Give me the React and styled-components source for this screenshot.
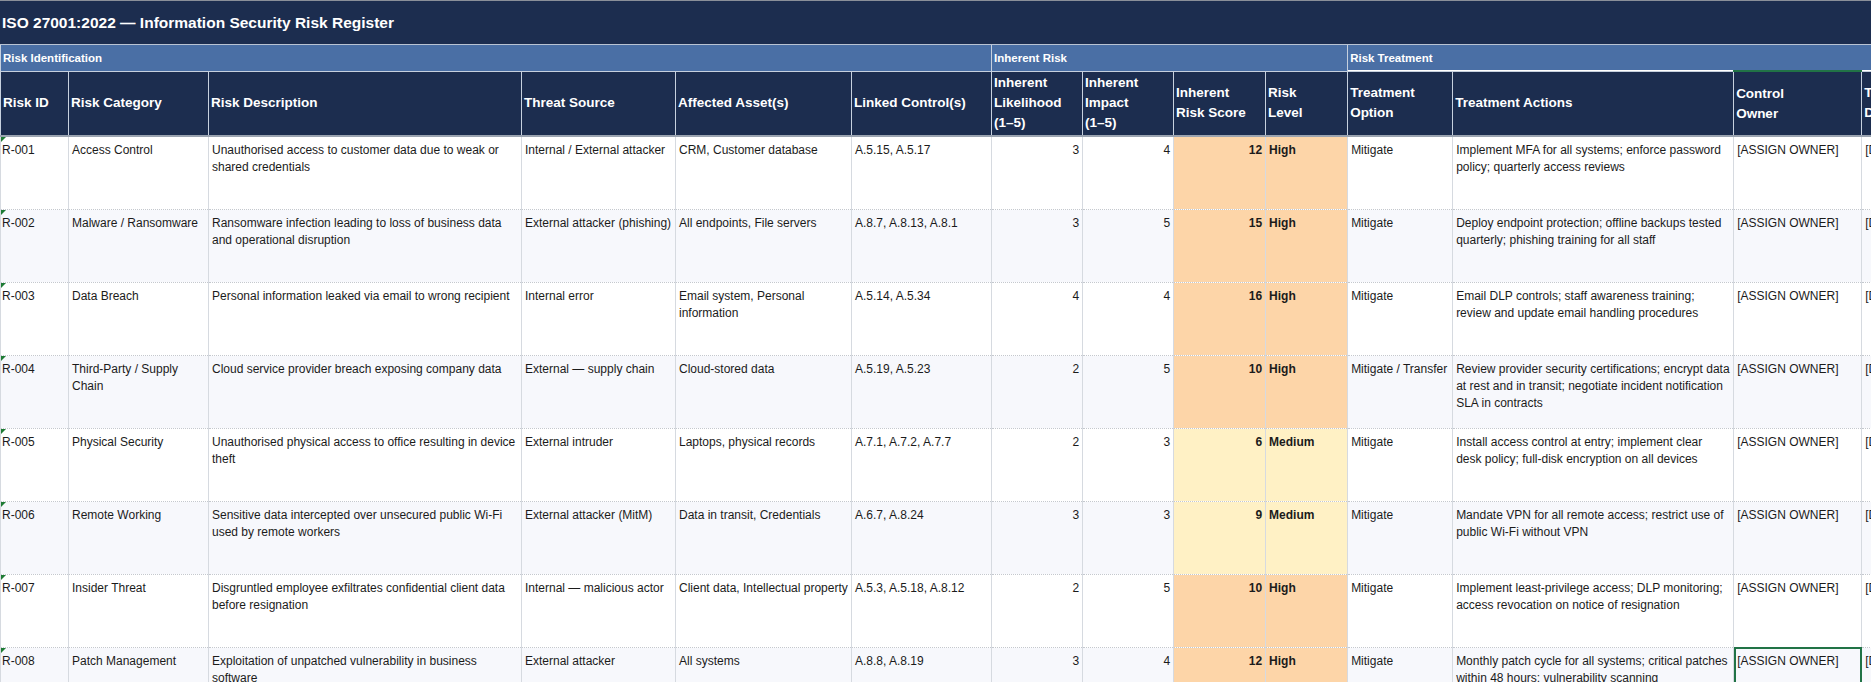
import React from 'react';
import styled, { createGlobalStyle } from 'styled-components';

const Global = createGlobalStyle`
  html, body { margin: 0; padding: 0; background: #fff; }
  body { font-family: "Liberation Sans", Arial, sans-serif; }
`;

const Sheet = styled.div`
  width: 1871px;
  height: 682px;
  overflow: hidden;
  position: relative;
  border-top: 1px solid #8a8f99;
  box-sizing: border-box;
`;

const Title = styled.div`
  height: 44px;
  width: 2000px;
  background: #1c2d4f;
  color: #fff;
  font-size: 15.5px;
  font-weight: 700;
  display: flex;
  align-items: center;
  padding-left: 2px;
  border-bottom: 1px solid #b9c3d3;
  box-sizing: border-box;
`;

const Table = styled.table`
  border-collapse: collapse;
  table-layout: fixed;
  width: ${(p) => p.$width}px;
  font-size: 12px;
  color: #1b1b1b;
`;

const GroupCell = styled.th`
  background: #4a6fa5;
  color: #fff;
  font-size: 11.5px;
  font-weight: 700;
  text-align: left;
  height: 25px;
  padding: 0 2px;
  border-left: 1px solid #c6d0de;
  border-bottom: 1px solid #c6d0de;
  white-space: nowrap;
  overflow: hidden;
`;

const HeadCell = styled.th`
  background: #1c2d4f;
  color: #fff;
  font-size: 13.5px;
  font-weight: 700;
  text-align: left;
  height: 63px;
  padding: 0 2px;
  line-height: 20px;
  border-left: 1px solid #c6d0de;
  border-bottom: 2px solid #9aa3b0;
  white-space: nowrap;
  overflow: hidden;
  ${(p) => p.$active && 'border-top: 2px solid #217346;'}
`;

const Row = styled.tr`
  height: 73px;
  background: ${(p) => (p.$alt ? '#f7f8fc' : '#fff')};
`;

const Cell = styled.td`
  vertical-align: top;
  padding: 5px 3px 0;
  line-height: 17px;
  border-left: 1px solid #d6dae0;
  border-bottom: 1px dotted #c4c8ce;
  text-align: ${(p) => (p.$num ? 'right' : 'left')};
  font-weight: ${(p) => (p.$bold ? 700 : 400)};
  background: ${(p) => p.$bg || 'transparent'};
  white-space: ${(p) => (p.$nowrap ? 'nowrap' : 'normal')};
  overflow: hidden;
  position: relative;
  ${(p) => p.$selected && 'outline: 2px solid #217346; outline-offset: -2px;'}
`;

const IdCell = styled(Cell)`
  padding-left: 1px;
  &::before {
    content: '';
    position: absolute;
    left: 0;
    top: 0;
    border-top: 5px solid #1e7b34;
    border-right: 5px solid transparent;
  }
`;

const cols = [68, 140, 313, 154, 176, 140, 91, 91, 92, 82, 105, 281, 128, 120];

const risks = [
  ['R-001', 'Access Control', 'Unauthorised access to customer data due to weak or shared credentials', 'Internal / External attacker', 'CRM, Customer database', 'A.5.15, A.5.17', 3, 4, 'Mitigate', 'Implement MFA for all systems; enforce password policy; quarterly access reviews'],
  ['R-002', 'Malware / Ransomware', 'Ransomware infection leading to loss of business data and operational disruption', 'External attacker (phishing)', 'All endpoints, File servers', 'A.8.7, A.8.13, A.8.1', 3, 5, 'Mitigate', 'Deploy endpoint protection; offline backups tested quarterly; phishing training for all staff'],
  ['R-003', 'Data Breach', 'Personal information leaked via email to wrong recipient', 'Internal error', 'Email system, Personal information', 'A.5.14, A.5.34', 4, 4, 'Mitigate', 'Email DLP controls; staff awareness training; review and update email handling procedures'],
  ['R-004', 'Third-Party / Supply Chain', 'Cloud service provider breach exposing company data', 'External — supply chain', 'Cloud-stored data', 'A.5.19, A.5.23', 2, 5, 'Mitigate / Transfer', 'Review provider security certifications; encrypt data at rest and in transit; negotiate incident notification SLA in contracts'],
  ['R-005', 'Physical Security', 'Unauthorised physical access to office resulting in device theft', 'External intruder', 'Laptops, physical records', 'A.7.1, A.7.2, A.7.7', 2, 3, 'Mitigate', 'Install access control at entry; implement clear desk policy; full-disk encryption on all devices'],
  ['R-006', 'Remote Working', 'Sensitive data intercepted over unsecured public Wi-Fi used by remote workers', 'External attacker (MitM)', 'Data in transit, Credentials', 'A.6.7, A.8.24', 3, 3, 'Mitigate', 'Mandate VPN for all remote access; restrict use of public Wi-Fi without VPN'],
  ['R-007', 'Insider Threat', 'Disgruntled employee exfiltrates confidential client data before resignation', 'Internal — malicious actor', 'Client data, Intellectual property', 'A.5.3, A.5.18, A.8.12', 2, 5, 'Mitigate', 'Implement least-privilege access; DLP monitoring; access revocation on notice of resignation'],
  ['R-008', 'Patch Management', 'Exploitation of unpatched vulnerability in business software', 'External attacker', 'All systems', 'A.8.8, A.8.19', 3, 4, 'Mitigate', 'Monthly patch cycle for all systems; critical patches within 48 hours; vulnerability scanning'],
];

const headers = [
  ['Risk ID'], ['Risk Category'], ['Risk Description'], ['Threat Source'], ['Affected Asset(s)'],
  ['Linked Control(s)'], ['Inherent', 'Likelihood', '(1–5)'], ['Inherent', 'Impact', '(1–5)'],
  ['Inherent', 'Risk Score'], ['Risk', 'Level'], ['Treatment', 'Option'], ['Treatment Actions'],
  ['Control', 'Owner'], ['Target', 'Date'],
];

const levelOf = (s) => (s >= 10 ? ['High', '#fdd5a8'] : ['Medium', '#fff1c5']);

export default function App() {
  const total = cols.reduce((a, b) => a + b, 0);
  return (
    <>
      <Global />
      <Sheet>
        <Title>ISO 27001:2022 — Information Security Risk Register</Title>
        <Table $width={total}>
          <colgroup>
            {cols.map((w, i) => <col key={i} style={{ width: w }} />)}
          </colgroup>
          <thead>
            <tr>
              <GroupCell colSpan={6}>Risk Identification</GroupCell>
              <GroupCell colSpan={4}>Inherent Risk</GroupCell>
              <GroupCell colSpan={4}>Risk Treatment</GroupCell>
            </tr>
            <tr>
              {headers.map((h, i) => (
                <HeadCell key={i} $active={i === 12}>
                  {h.map((line, j) => <div key={j}>{line}</div>)}
                </HeadCell>
              ))}
            </tr>
          </thead>
          <tbody>
            {risks.map((r, i) => {
              const score = r[6] * r[7];
              const [level, bg] = levelOf(score);
              return (
                <Row key={r[0]} $alt={i % 2 === 1}>
                  <IdCell>{r[0]}</IdCell>
                  <Cell>{r[1]}</Cell>
                  <Cell>{r[2]}</Cell>
                  <Cell>{r[3]}</Cell>
                  <Cell>{r[4]}</Cell>
                  <Cell>{r[5]}</Cell>
                  <Cell $num>{r[6]}</Cell>
                  <Cell $num>{r[7]}</Cell>
                  <Cell $num $bold $bg={bg}>{score}</Cell>
                  <Cell $bold $bg={bg}>{level}</Cell>
                  <Cell>{r[8]}</Cell>
                  <Cell>{r[9]}</Cell>
                  <Cell $nowrap $selected={i === 7}>[ASSIGN OWNER]</Cell>
                  <Cell $nowrap>[DD/MM/YYYY]</Cell>
                </Row>
              );
            })}
          </tbody>
        </Table>
      </Sheet>
    </>
  );
}
